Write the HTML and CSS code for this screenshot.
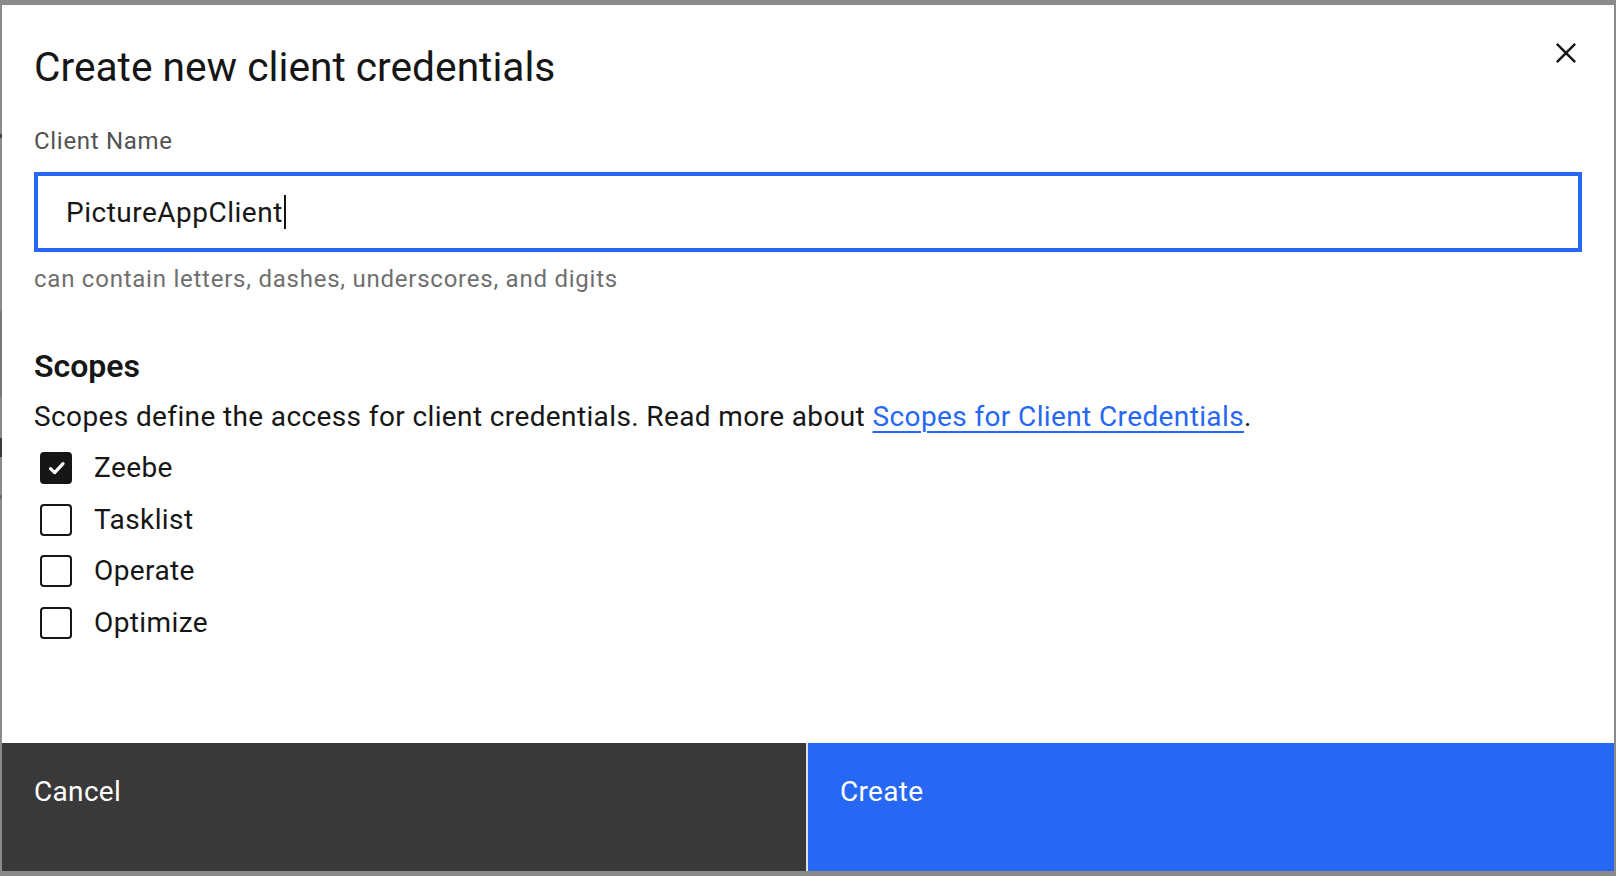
FILE: index.html
```html
<!DOCTYPE html>
<html lang="en">
<head>
<meta charset="utf-8">
<title>Create new client credentials</title>
<link rel="stylesheet" href="styles.css">
</head>
<body>
<div class="modal">
  <div class="modal-header">
    <h2 class="modal-title">Create new client credentials</h2>
    <button class="modal-close" aria-label="Close">
      <svg width="40" height="40" viewBox="0 0 32 32"><path fill="#161616" d="M24 9.4L22.6 8 16 14.6 9.4 8 8 9.4 14.6 16 8 22.6 9.4 24 16 17.4 22.6 24 24 22.6 17.4 16 24 9.4z"/></svg>
    </button>
  </div>
  <div class="modal-content">
    <label class="field-label">Client Name</label>
    <div class="text-input"><span class="input-value">PictureAppClient</span><span class="caret"></span></div>
    <div class="helper">can contain letters, dashes, underscores, and digits</div>
    <h3 class="section-title">Scopes</h3>
    <p class="section-text">Scopes define the access for client credentials. Read more about <a class="link" href="#">Scopes for Client Credentials</a>.</p>
    <div class="checkbox-list">
      <div class="checkbox-row">
        <span class="box checked"><svg width="32" height="32" viewBox="0 0 32 32"><path d="M10.5 16.6l4.2 4 8.3-9" fill="none" stroke="#fff" stroke-width="3.2" stroke-linecap="round" stroke-linejoin="round"/></svg></span>
        <span class="checkbox-label">Zeebe</span>
      </div>
      <div class="checkbox-row">
        <span class="box"></span>
        <span class="checkbox-label">Tasklist</span>
      </div>
      <div class="checkbox-row">
        <span class="box"></span>
        <span class="checkbox-label">Operate</span>
      </div>
      <div class="checkbox-row">
        <span class="box"></span>
        <span class="checkbox-label">Optimize</span>
      </div>
    </div>
  </div>
  <div class="modal-footer">
    <button class="btn btn-secondary">Cancel</button>
    <button class="btn btn-primary">Create</button>
  </div>
</div>
</body>
</html>
```

FILE: styles.css
```css
* { box-sizing: border-box; }

html, body {
  margin: 0;
  height: 876px;
}

body {
  padding: 5px 2px;
  background:
    linear-gradient(to bottom,
      #8a8a8a 0, #8a8a8a 134px, #444 134px, #444 138px, #8a8a8a 138px,
      #8a8a8a 311px, #777 311px, #777 397px, #8a8a8a 397px,
      #8a8a8a 438px, #3a3a3a 438px, #3a3a3a 457px, #8a8a8a 457px,
      #8a8a8a 495px, #6e6e6e 495px, #6e6e6e 499px, #8a8a8a 499px) left top / 2px 100% no-repeat,
    #8a8a8a;
  font-family: Roboto, "Noto Sans", sans-serif;
  color: #161616;
  overflow: hidden;
}

.modal {
  height: 866px;
  background: #fff;
  display: flex;
  flex-direction: column;
}

.modal-header {
  display: flex;
  align-items: flex-start;
  padding: 34px 0 0 32px;
}

.modal-title {
  flex: 1;
  margin: 0;
  font-size: 40.7px;
  line-height: 56px;
  font-weight: 400;
  color: #161616;
}

.modal-close {
  width: 96px;
  height: 96px;
  margin-top: -34px;
  margin-bottom: -40px;
  padding: 0;
  border: 0;
  background: transparent;
  display: flex;
  align-items: center;
  justify-content: center;
}

.modal-content {
  padding: 30px 32px 0 32px;
}

.field-label {
  display: block;
  font-size: 24px;
  line-height: 32px;
  letter-spacing: 0.7px;
  color: #525252;
  margin-bottom: 15px;
}

.text-input {
  height: 80px;
  border: 4px solid #2667f3;
  padding-left: 28px;
  display: flex;
  align-items: center;
  font-size: 28px;
  letter-spacing: 0.5px;
  color: #161616;
}

.caret {
  display: inline-block;
  width: 2px;
  height: 34px;
  background: #161616;
  margin-left: 1px;
}

.helper {
  margin-top: 11px;
  font-size: 24px;
  line-height: 32px;
  letter-spacing: 0.76px;
  color: #6f6f6f;
}

.section-title {
  margin: 51px 0 0;
  font-size: 32px;
  line-height: 40px;
  font-weight: 600;
  color: #161616;
}

.section-text {
  margin: 11px 0 0;
  font-size: 28px;
  line-height: 40px;
  letter-spacing: 0.38px;
  color: #161616;
}

.link {
  color: #2667f3;
  text-decoration: underline;
  text-decoration-thickness: 2px;
  text-underline-offset: 5px;
}

.checkbox-list {
  margin-top: 5px;
  display: flex;
  flex-direction: column;
}

.checkbox-row {
  height: 51.7px;
  display: flex;
  align-items: center;
  padding-left: 6px;
  gap: 22px;
}

.box {
  width: 32px;
  height: 32px;
  border: 2px solid #161616;
  border-radius: 4px;
  display: flex;
  align-items: center;
  justify-content: center;
}

.box.checked {
  background: #161616;
}

.box svg { flex: none; }

.checkbox-label {
  font-size: 28px;
  line-height: 40px;
  letter-spacing: 0.4px;
  color: #161616;
}

.modal-footer {
  margin-top: auto;
  height: 128px;
  display: flex;
}

.btn {
  flex: 1;
  border: 0;
  margin: 0;
  padding: 31px 32px 0;
  text-align: left;
  align-self: stretch;
  display: flex;
  align-items: flex-start;
  font-family: inherit;
  font-size: 28px;
  line-height: 36px;
  letter-spacing: 0.32px;
  color: #fff;
}

.btn-secondary {
  background: #393939;
}

.btn-primary {
  background: #2667f3;
  box-shadow: -2px 0 0 0 #e0e0e0;
}
```
